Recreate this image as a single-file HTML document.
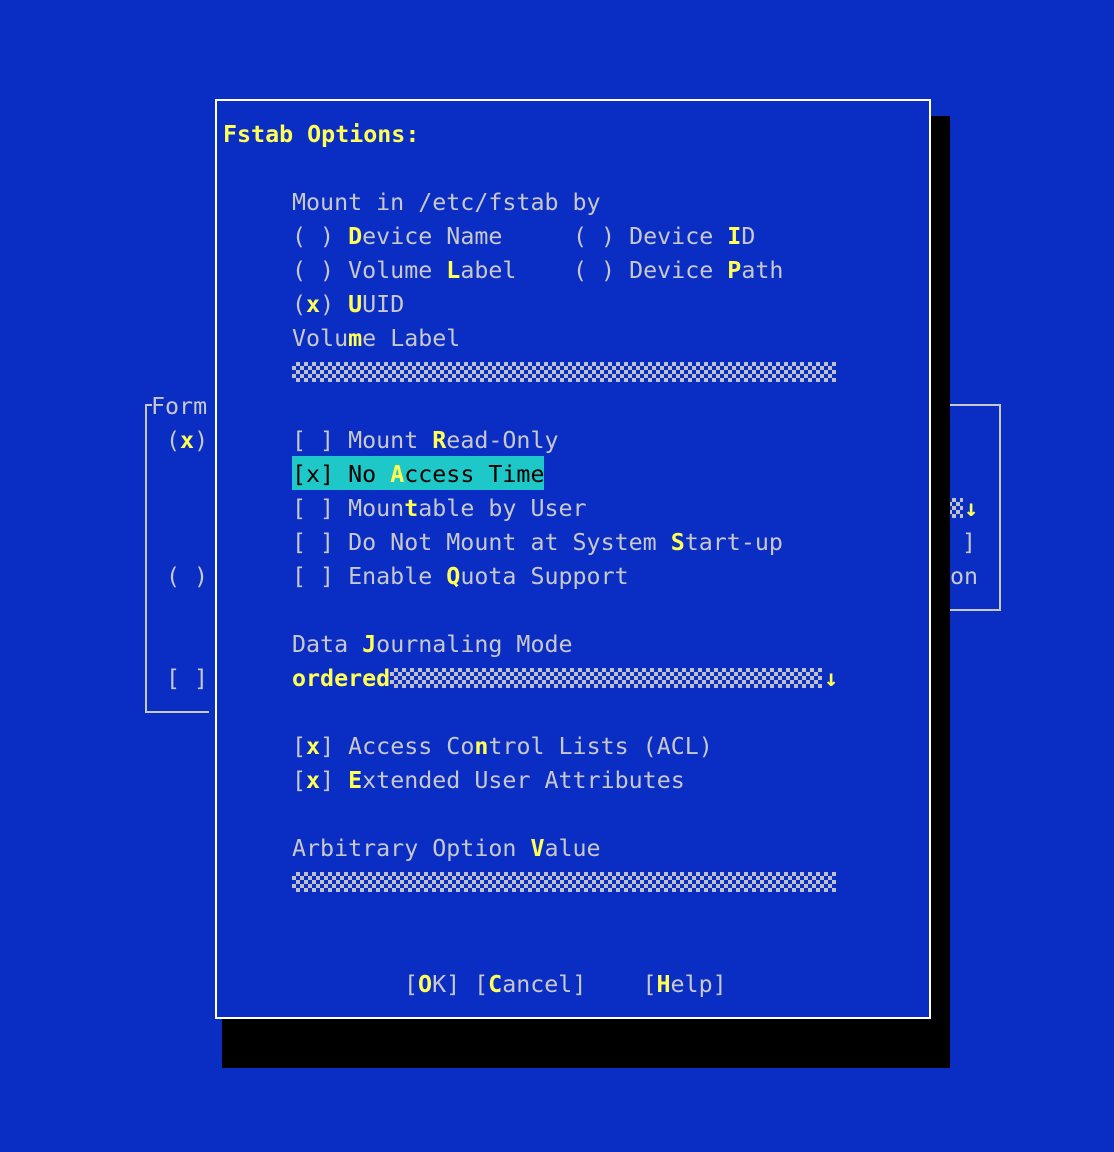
<!DOCTYPE html>
<html><head><meta charset="utf-8">
<style>
html,body{margin:0;padding:0}
body{width:1114px;height:1152px;background:#0a2ec4;position:relative;overflow:hidden;
font-family:"DejaVu Sans Mono","Liberation Mono",monospace;font-size:23.3px;color:#c8c8c8}
.t{position:absolute;height:34px;line-height:38px;white-space:pre}
.y{color:#ffff55;font-weight:bold}
.f{position:absolute;height:20px;
background-color:#0a2ec4;
background-image:repeating-conic-gradient(#c0c0c8 0 25%, transparent 0 50%);
background-size:8px 8px}
.b{position:absolute;background:#c8c8c8}
</style></head><body>
<div class="b" style="left:145px;top:404px;width:2px;height:309px"></div>
<div class="b" style="left:145px;top:404px;width:7px;height:2px"></div>
<div class="b" style="left:145px;top:711px;width:64px;height:2px"></div>
<div class="t" style="left:151px;top:388px">Form</div>
<div class="t" style="left:166px;top:422px">(<span class="y">x</span>)</div>
<div class="t" style="left:166px;top:558px">( )</div>
<div class="t" style="left:166px;top:660px">[ ]</div>
<div class="b" style="left:940px;top:404px;width:61px;height:2px"></div>
<div class="b" style="left:999px;top:404px;width:2px;height:207px"></div>
<div class="b" style="left:940px;top:609px;width:61px;height:2px"></div>
<div class="f" style="left:940px;top:498px;width:23px"></div>
<div class="t y" style="left:964px;top:490px">↓</div>
<div class="t" style="left:962px;top:524px">]</div>
<div class="t" style="left:950px;top:558px">on</div>
<div style="position:absolute;left:931px;top:116px;width:19px;height:952px;background:#000"></div>
<div style="position:absolute;left:222px;top:1019px;width:728px;height:49px;background:#000"></div>
<div style="position:absolute;left:215px;top:99px;width:712px;height:916px;border:2px solid #fff;background:#0a2ec4"></div>
<div class="t y" style="left:223px;top:116px">Fstab Options:</div>
<div class="t" style="left:292px;top:184px">Mount in /etc/fstab by</div>
<div class="t" style="left:292px;top:218px">( ) <span class="y">D</span>evice Name</div>
<div class="t" style="left:573px;top:218px">( ) Device <span class="y">I</span>D</div>
<div class="t" style="left:292px;top:252px">( ) Volume <span class="y">L</span>abel</div>
<div class="t" style="left:573px;top:252px">( ) Device <span class="y">P</span>ath</div>
<div class="t" style="left:292px;top:286px">(<span class="y">x</span>) <span class="y">U</span>UID</div>
<div class="t" style="left:292px;top:320px">Volu<span class="y">m</span>e Label</div>
<div class="f" style="left:292px;top:362px;width:544px"></div>
<div class="t" style="left:292px;top:422px">[ ] Mount <span class="y">R</span>ead-Only</div>
<div style="position:absolute;left:292px;top:456px;width:252px;height:34px;background:#1ec8c8"></div>
<div class="t" style="left:292px;top:456px;color:#000">[x] No <span class="y">A</span>ccess Time</div>
<div class="t" style="left:292px;top:490px">[ ] Moun<span class="y">t</span>able by User</div>
<div class="t" style="left:292px;top:524px">[ ] Do Not Mount at System <span class="y">S</span>tart-up</div>
<div class="t" style="left:292px;top:558px">[ ] Enable <span class="y">Q</span>uota Support</div>
<div class="t" style="left:292px;top:626px">Data <span class="y">J</span>ournaling Mode</div>
<div class="f" style="left:390px;top:668px;width:432px"></div>
<div class="t y" style="left:292px;top:660px">ordered</div>
<div class="t y" style="left:824px;top:660px">↓</div>
<div class="t" style="left:292px;top:728px">[<span class="y">x</span>] Access Co<span class="y">n</span>trol Lists (ACL)</div>
<div class="t" style="left:292px;top:762px">[<span class="y">x</span>] <span class="y">E</span>xtended User Attributes</div>
<div class="t" style="left:292px;top:830px">Arbitrary Option <span class="y">V</span>alue</div>
<div class="f" style="left:292px;top:872px;width:544px"></div>
<div class="t" style="left:404px;top:966px">[<span class="y">O</span>K] [<span class="y">C</span>ancel]    [<span class="y">H</span>elp]</div>
</body></html>
